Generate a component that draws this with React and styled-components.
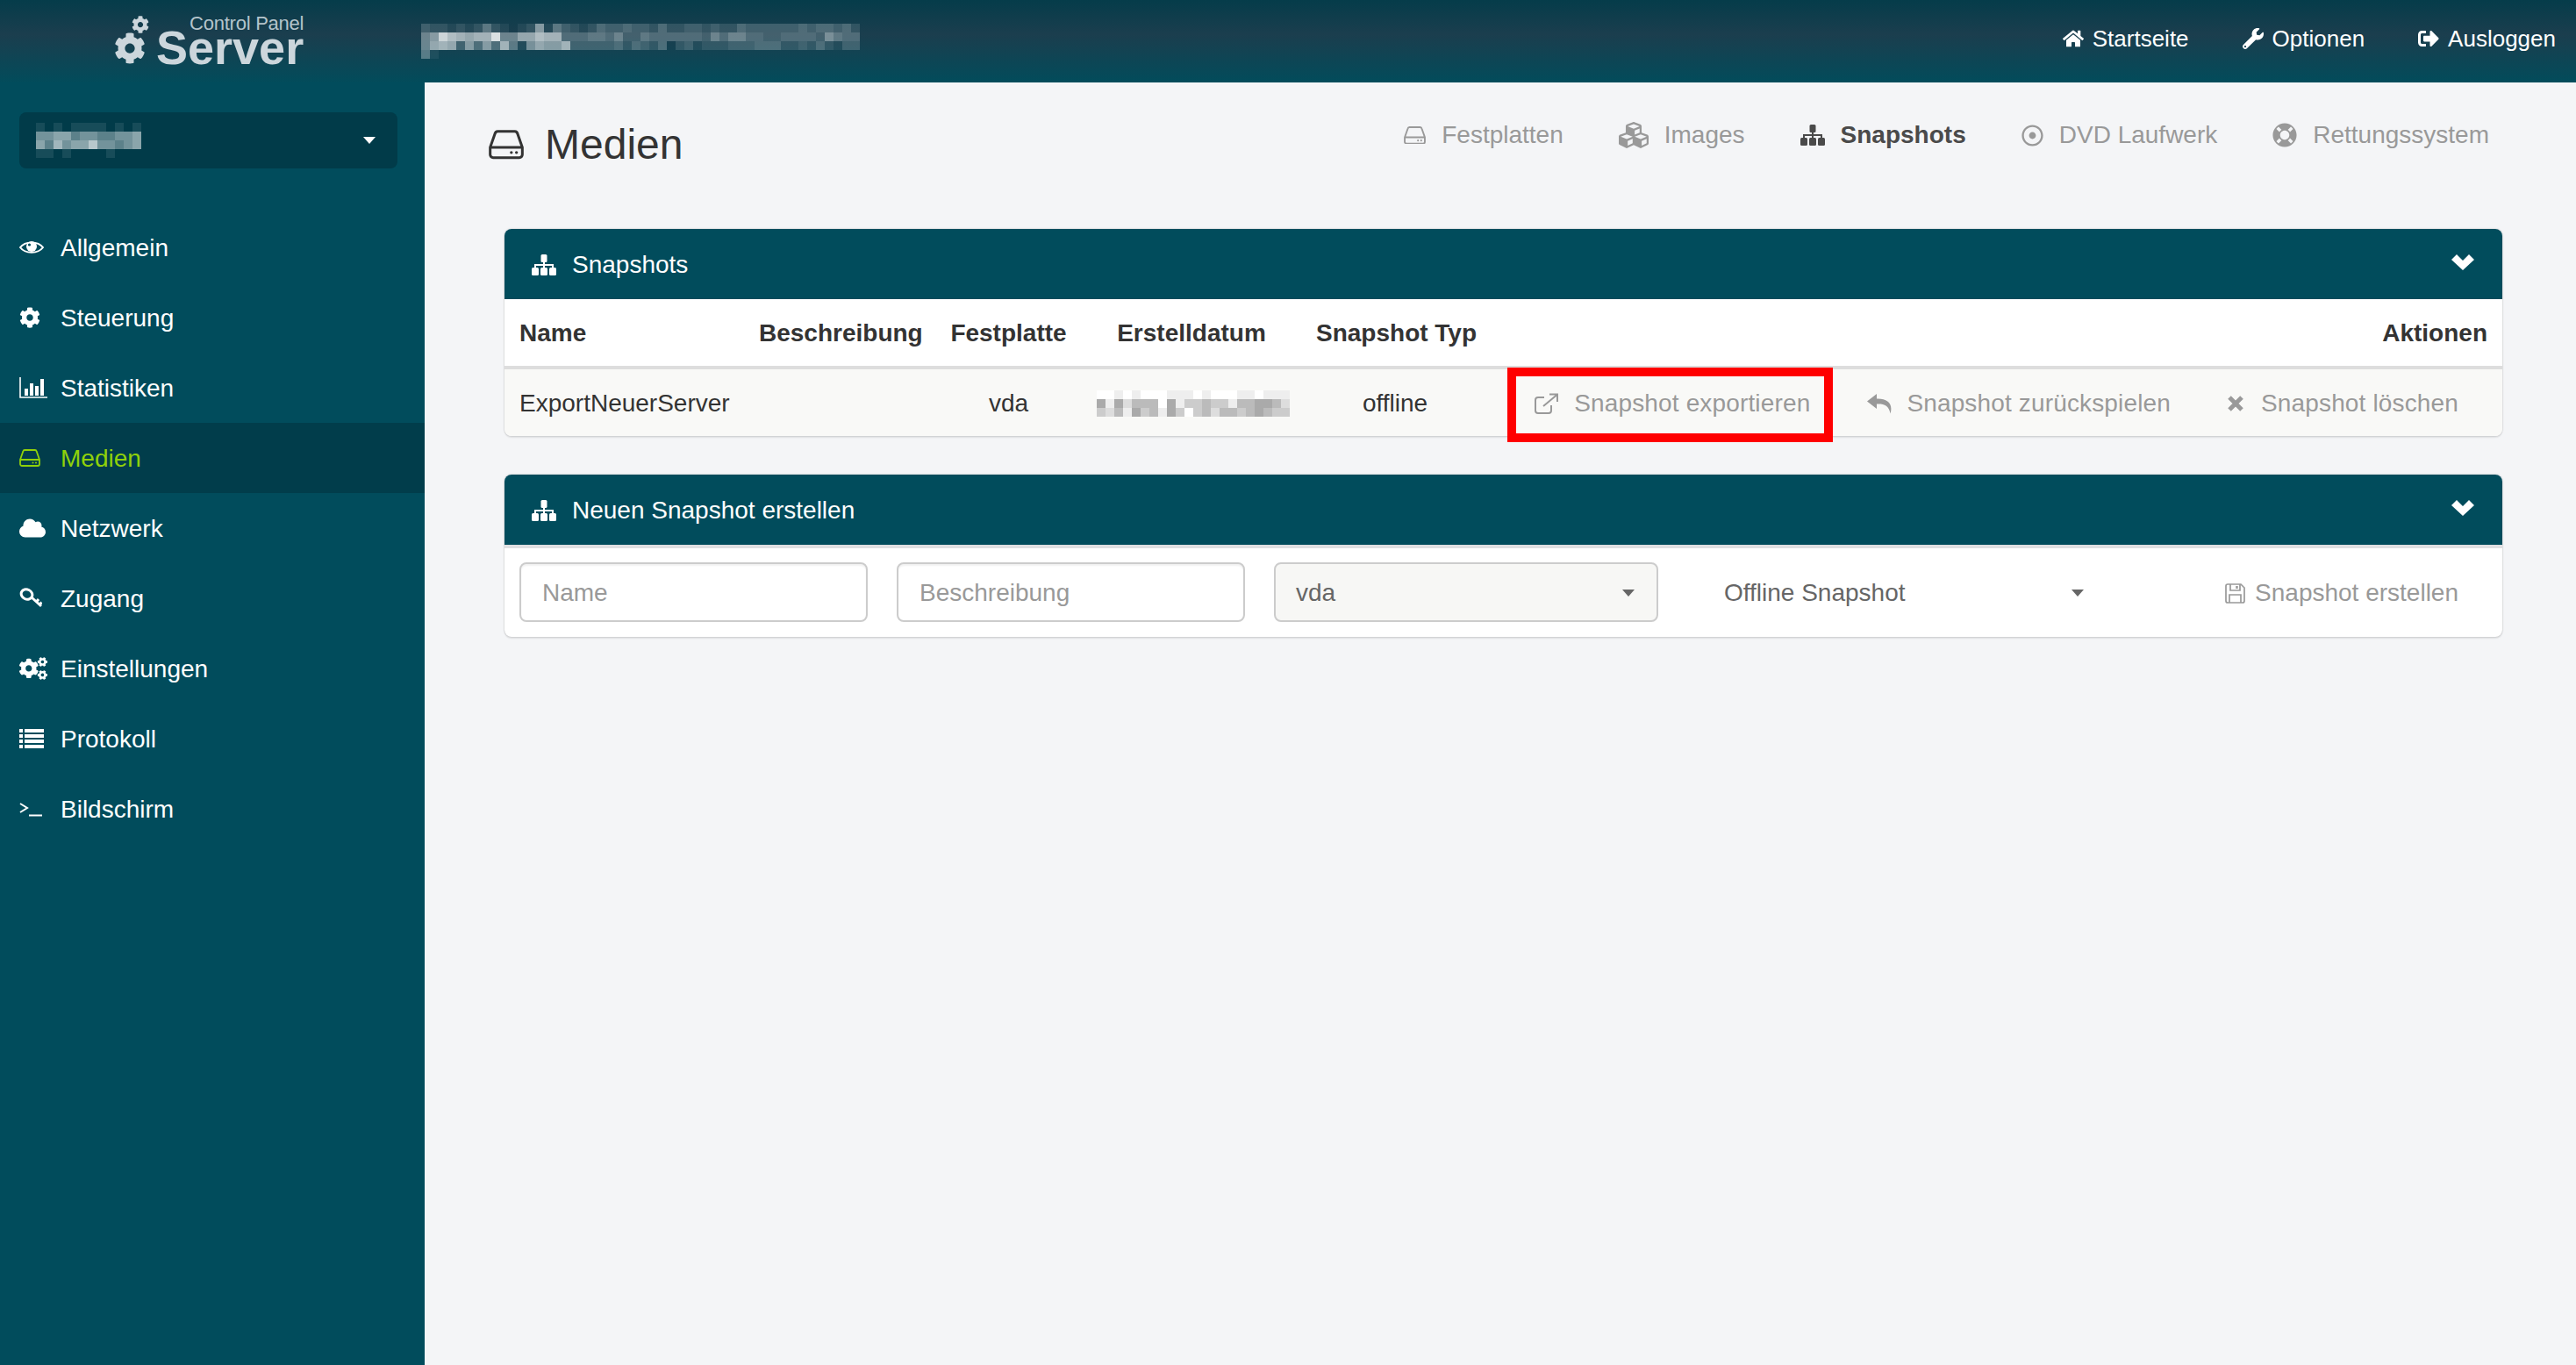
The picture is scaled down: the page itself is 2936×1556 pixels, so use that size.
import React from "react";
import styled, { createGlobalStyle } from "styled-components";
import {
  FaCog, FaCloud, FaCogs, FaHome, FaWrench, FaSignOutAlt, FaCubes, FaRegDotCircle, FaLifeRing,
} from "react-icons/fa";

const Global = createGlobalStyle`
  html, body { margin: 0; padding: 0; background: #f4f5f7; }
  body { font-family: "Liberation Sans", Arial, sans-serif; color: #333; }
  * { box-sizing: border-box; }
`;

const Page = styled.div`
  width: 2936px;
  height: 1556px;
  display: flex;
  flex-direction: column;
  overflow: hidden;
  background: #f4f5f7;
`;

const TopBar = styled.header`
  height: 94px;
  flex: none;
  display: flex;
  align-items: center;
  background: linear-gradient(#053c4a 0%, #1b3e4e 42%, #024c5b 100%);
`;

const Logo = styled.div`
  width: 480px;
  height: 94px;
  padding-left: 130px;
  display: flex;
  flex: none;
`;

const LogoGears = styled.div`
  position: relative;
  width: 48px;
  height: 94px;
  color: #ccd6dc;
  svg { position: absolute; }
  svg:first-child { left: 20px; top: 18px; }
  svg:last-child { left: 0; top: 37px; }
`;

const LogoText = styled.div`
  display: flex;
  flex-direction: column;
  align-items: flex-end;
  color: #ccd6dc;
  padding-top: 19px;
`;

const LogoSmall = styled.span`
  font-size: 22px;
  line-height: 16px;
  color: #b4c4cb;
  font-weight: 400;
  letter-spacing: -0.25px;
`;

const LogoBig = styled.span`
  font-size: 54px;
  line-height: 38px;
  font-weight: 700;
`;

const TopNav = styled.nav`
  margin-left: auto;
  display: flex;
  gap: 61px;
  padding-right: 23px;
  margin-top: -6px;
`;

const TopLink = styled.a`
  display: flex;
  align-items: center;
  gap: 10px;
  font-size: 26px;
  line-height: 32px;
  color: #fff;
`;

const Body = styled.div`
  flex: 1;
  display: flex;
  min-height: 0;
`;

const Sidebar = styled.aside`
  width: 484px;
  flex: none;
  background: #014c5c;
  padding-top: 34px;
`;

const ServerSelect = styled.div`
  margin: 0 31px 0 22px;
  height: 64px;
  border-radius: 8px;
  background: #013b49;
  display: flex;
  align-items: center;
  padding: 0 25px 0 19px;
  justify-content: space-between;
`;

const Caret = styled.i`
  display: block;
  flex: none;
  width: 0;
  height: 0;
  border-left: 7px solid transparent;
  border-right: 7px solid transparent;
  border-top: 8px solid ${(p) => p.$color || "#fff"};
`;

const Menu = styled.ul`
  list-style: none;
  margin: 50px 0 0;
  padding: 0;
`;

const MenuItem = styled.li`
  height: 80px;
  display: flex;
  align-items: center;
  padding-left: 22px;
  font-size: 28px;
  color: ${(p) => (p.$active ? "#8fd10a" : "#fff")};
  background: ${(p) => (p.$active ? "#013d4b" : "transparent")};
`;

const MenuIcon = styled.span`
  width: 47px;
  flex: none;
  display: flex;
  align-items: center;
`;

const MenuLabel = styled.span`
  padding-top: 2px;
`;

const Main = styled.main`
  flex: 1;
  min-width: 0;
  padding-top: 47px;
`;

const PageHead = styled.div`
  height: 120px;
  display: flex;
  align-items: flex-start;
  justify-content: space-between;
  padding: 0 99px 0 73px;
`;

const PageTitle = styled.h1`
  margin: 0;
  display: flex;
  align-items: center;
  gap: 24px;
  font-size: 48px;
  line-height: 48px;
  font-weight: 400;
  color: #333;
`;

const Tabs = styled.nav`
  display: flex;
  gap: 63px;
  margin-top: -4px;
`;

const Tab = styled.a`
  display: flex;
  align-items: center;
  gap: 18px;
  font-size: 28px;
  line-height: 32px;
  color: ${(p) => (p.$active ? "#4a4a4a" : "#999")};
  font-weight: ${(p) => (p.$active ? 700 : 400)};
`;

const Panels = styled.div`
  display: flex;
  flex-direction: column;
  gap: 44px;
  margin: 0 84px 0 91px;
`;

const Panel = styled.section`
  background: #fff;
  border-radius: 8px;
  box-shadow: 0 0 2px rgba(0, 0, 0, 0.25), 0 2px 2px rgba(0, 0, 0, 0.08);
`;

const PanelHeader = styled.div`
  height: 80px;
  background: #014c5c;
  border-radius: 8px 8px 0 0;
  color: #fff;
  font-size: 28px;
  display: flex;
  align-items: center;
  gap: 18px;
  padding: 1px 32px 0 31px;
`;

const PanelChevron = styled.svg`
  margin-left: auto;
  margin-top: -5px;
  flex: none;
`;

const Table = styled.table`
  width: 100%;
  table-layout: fixed;
  border-collapse: collapse;
  font-size: 28px;
`;

const HeadCell = styled.th`
  height: 78px;
  border-bottom: 4px solid #ddd;
  padding: 1px 17px 0;
  font-weight: 700;
  color: #333;
  width: ${(p) => (p.$w ? `${p.$w}px` : "auto")};
  text-align: ${(p) => p.$align || "center"};
  white-space: nowrap;
`;

const Row = styled.tr`
  background: #f9f9f7;
`;

const Cell = styled.td`
  height: 78px;
  padding: 2px 17px 0;
  text-align: ${(p) => p.$align || "center"};
  color: #333;
  white-space: nowrap;
  &:first-child { border-bottom-left-radius: 8px; }
  &:last-child { border-bottom-right-radius: 8px; }
`;

const Actions = styled.div`
  display: flex;
  justify-content: flex-end;
  margin-right: 1px;
`;

const ActionLink = styled.a`
  position: relative;
  display: flex;
  align-items: center;
  gap: ${(p) => p.$gap || 16}px;
  padding: 0 32px;
  color: #999;
  line-height: 32px;
  letter-spacing: 0.15px;
`;

const Highlight = styled.span`
  position: absolute;
  left: 1px;
  top: calc(50% - 41px);
  width: 371px;
  height: 85px;
  border: 10px solid #f00;
  pointer-events: none;
`;

const FormRow = styled.div`
  border-top: 4px solid #dfdfe1;
  display: flex;
  align-items: center;
  gap: 33px;
  padding: 16px 50px 17px 17px;
  font-size: 28px;
`;

const TextInput = styled.input`
  width: 397px;
  height: 68px;
  flex: none;
  border: 2px solid #ccc;
  border-radius: 8px;
  padding: 2px 24px 0;
  background: #fff;
  font: inherit;
  color: #555;
  box-shadow: inset 0 2px 2px rgba(0, 0, 0, 0.06);
  &::placeholder { color: #999; opacity: 1; }
`;

const SelectBox = styled.div`
  width: ${(p) => p.$w}px;
  height: 68px;
  flex: none;
  display: flex;
  align-items: center;
  justify-content: space-between;
  border: 2px solid ${(p) => (p.$plain ? "transparent" : "#ccc")};
  border-radius: 8px;
  background: ${(p) => (p.$plain ? "transparent" : "#f7f7f5")};
  padding: ${(p) => (p.$plain ? "2px 26px 0 40px" : "2px 25px 0 23px")};
  color: #666;
`;

const SaveLink = styled.a`
  margin-left: auto;
  display: flex;
  align-items: center;
  gap: 11px;
  color: #999;
  padding-top: 2px;
`;

const MosaicSvg = styled.svg`
  display: block;
  flex: none;
`;

/* pixelated (redacted) text, drawn from per-row brightness digits */
const Mosaic = ({ rows, color, scale }) => {
  const cols = Math.max(...rows.map((r) => r.length));
  return (
    <MosaicSvg width={cols * 10} height={rows.length * 10} viewBox={`0 0 ${cols * 10} ${rows.length * 10}`} shapeRendering="crispEdges">
      {rows.map((row, y) =>
        row.split("").map((c, x) => {
          if (c === " ") return null;
          const v = parseInt(c, 16);
          return <rect key={`${x}-${y}`} x={x * 10} y={y * 10} width="10" height="10" fill={color} opacity={v * scale} />;
        })
      )}
    </MosaicSvg>
  );
};

const GrayMosaic = ({ rows }) => (
  <MosaicSvg width={220} height={30} viewBox="0 0 220 30" shapeRendering="crispEdges">
    {rows.map((row, y) =>
      row.split("").map((c, x) => (
        <rect key={`${x}-${y}`} x={x * 10} y={y * 10} width="10" height="10" fill={`#${c}${c}${c}`} />
      ))
    )}
  </MosaicSvg>
);

const HddIcon = ({ w = 24 }) => (
  <svg width={w} height={(w * 20) / 24} viewBox="0 0 24 20" fill="none" stroke="currentColor" strokeWidth="1.8">
    <path d="M1 12 L4.3 2.6 A2 2 0 0 1 6.2 1 H17.8 A2 2 0 0 1 19.7 2.6 L23 12 V17 A2 2 0 0 1 21 19 H3 A2 2 0 0 1 1 17 Z M1 12 H23" />
    <circle cx="15.5" cy="15.5" r="1" fill="currentColor" stroke="none" />
    <circle cx="19" cy="15.5" r="1" fill="currentColor" stroke="none" />
  </svg>
);

const SitemapIcon = () => (
  <svg width="28" height="24" viewBox="0 0 28 24" fill="currentColor">
    <rect x="10.5" y="0" width="7" height="9" rx="1.5" />
    <rect x="0" y="15" width="8" height="9" rx="1.5" />
    <rect x="10" y="15" width="8" height="9" rx="1.5" />
    <rect x="20" y="15" width="8" height="9" rx="1.5" />
    <path d="M14 8 V16 M4 16 V12 H24 V16" fill="none" stroke="currentColor" strokeWidth="2" />
  </svg>
);

const EyeIcon = () => (
  <svg width="28" height="18" viewBox="0 0 28 18">
    <path d="M1 9 C6.5 1.5 21.5 1.5 27 9 C21.5 16.5 6.5 16.5 1 9 Z" fill="none" stroke="currentColor" strokeWidth="2" />
    <circle cx="14" cy="8" r="6" fill="currentColor" />
    <circle cx="11.5" cy="6" r="1.6" fill="#014c5c" />
  </svg>
);

const StatsIcon = () => (
  <svg width="32" height="24" viewBox="0 0 32 24" fill="currentColor">
    <path d="M1 0 V23 H32" fill="none" stroke="currentColor" strokeWidth="1.6" />
    <rect x="6" y="13" width="4" height="8" />
    <rect x="12" y="7" width="4" height="14" />
    <rect x="18" y="10" width="4" height="11" />
    <rect x="24" y="2" width="4" height="19" />
  </svg>
);

const KeyIcon = () => (
  <svg width="26" height="25" viewBox="0 0 26 25" fill="none" stroke="currentColor" strokeWidth="3">
    <ellipse cx="8.5" cy="7.5" rx="6.5" ry="5.5" transform="rotate(25 8.5 7.5)" />
    <path d="M14 11 L25 21 M19.5 16 L22 13 M23 19.5 L25.5 16.5" />
  </svg>
);

const ListIcon = () => (
  <svg width="28" height="22" viewBox="0 0 28 22" fill="currentColor">
    {[0, 6, 12, 18].map((y) => (
      <React.Fragment key={y}>
        <rect x="0" y={y} width="4" height="4" />
        <rect x="6" y={y} width="22" height="4" />
      </React.Fragment>
    ))}
  </svg>
);

const TerminalIcon = () => (
  <svg width="26" height="18" viewBox="0 0 26 18" fill="none" stroke="currentColor" strokeWidth="2">
    <path d="M1 3 L9 8 L1 13 M11 16.5 H26" />
  </svg>
);

const ExportIcon = () => (
  <svg width="28" height="24" viewBox="0 0 28 24" fill="none" stroke="currentColor" strokeWidth="2">
    <path d="M11 5 H4 Q1 5 1 8 V20 Q1 23 4 23 H16 Q19 23 19 20 V14" />
    <path d="M10 15 L25 2.5 M17 1.5 H26 V10" />
  </svg>
);

const ReplyIcon = () => (
  <svg width="30" height="24" viewBox="0 0 30 24" fill="currentColor">
    <path d="M12 1 L1 9.5 L12 18 V12.5 C20 12 26 14 27.5 23.5 C31 12 24 6 12 6.5 Z" />
  </svg>
);

const CrossIcon = () => (
  <svg width="20" height="18" viewBox="0 0 20 18" fill="none" stroke="currentColor" strokeWidth="5">
    <path d="M3 2 L17 16 M17 2 L3 16" />
  </svg>
);

const SaveIcon = () => (
  <svg width="23" height="23" viewBox="0 0 23 23" fill="none" stroke="currentColor" strokeWidth="1.7">
    <path d="M1 3 Q1 1 3 1 H18 L22 5 V20 Q22 22 20 22 H3 Q1 22 1 20 Z" />
    <path d="M6 1 V8 H17 V1 M5 22 V13 H18 V22" />
    <path d="M13.5 3 V6" strokeWidth="2.4" />
  </svg>
);

const ChevronIcon = () => (
  <PanelChevron width="26" height="18" viewBox="0 0 26 18" fill="#fff">
    <path d="M0 6 L6 0 L13 7 L20 0 L26 6 L13 18 Z" />
  </PanelChevron>
);

const menu = [
  ["Allgemein", <EyeIcon />],
  ["Steuerung", <FaCog size={24} />],
  ["Statistiken", <StatsIcon />],
  ["Medien", <HddIcon />, true],
  ["Netzwerk", <FaCloud size={30} />],
  ["Zugang", <KeyIcon />],
  ["Einstellungen", <FaCogs size={32} />],
  ["Protokoll", <ListIcon />],
  ["Bildschirm", <TerminalIcon />],
];

const tabs = [
  ["Festplatten", <HddIcon w={25} />],
  ["Images", <FaCubes size={34} />],
  ["Snapshots", <SitemapIcon />, true],
  ["DVD Laufwerk", <FaRegDotCircle size={25} />],
  ["Rettungssystem", <FaLifeRing size={28} />],
];

const headerBlur = [
  "32212125210128153212433433242233232243333334344342",
  "68dba9aae6699baa444554633544444436466443344443754".padEnd(50, "4"),
  "69a938484a51798 8a33333424324 02312223334442232 4213333".replace(/ /g, "").slice(0, 50),
  "51",
];

const selectBlur = ["1 1 1111 1 1", "556645544556", "647566855456", "11 1    1"];

const dateBlur = ["ffefefffeeefefffeefeee", "aeadbbbfaeccbccebbaabd", "cdbeacbeacfcbdbbcbabcc"];

export default function App() {
  return (
    <Page>
      <Global />
      <TopBar>
        <Logo>
          <LogoGears>
            <FaCog size={20} />
            <FaCog size={36} />
          </LogoGears>
          <LogoText>
            <LogoSmall>Control Panel</LogoSmall>
            <LogoBig>Server</LogoBig>
          </LogoText>
        </Logo>
        <Mosaic rows={headerBlur} color="#fff" scale={0.06} />
        <TopNav>
          <TopLink><FaHome size={24} />Startseite</TopLink>
          <TopLink><FaWrench size={24} />Optionen</TopLink>
          <TopLink><FaSignOutAlt size={24} />Ausloggen</TopLink>
        </TopNav>
      </TopBar>
      <Body>
        <Sidebar>
          <ServerSelect>
            <Mosaic rows={selectBlur} color="#fff" scale={0.09} />
            <Caret />
          </ServerSelect>
          <Menu>
            {menu.map(([label, icon, active]) => (
              <MenuItem key={label} $active={active}>
                <MenuIcon>{icon}</MenuIcon>
                <MenuLabel>{label}</MenuLabel>
              </MenuItem>
            ))}
          </Menu>
        </Sidebar>
        <Main>
          <PageHead>
            <PageTitle><HddIcon w={40} />Medien</PageTitle>
            <Tabs>
              {tabs.map(([label, icon, active]) => (
                <Tab key={label} $active={active}>{icon}{label}</Tab>
              ))}
            </Tabs>
          </PageHead>
          <Panels>
            <Panel>
              <PanelHeader>
                <SitemapIcon />Snapshots
                <ChevronIcon />
              </PanelHeader>
              <Table>
                <thead>
                  <tr>
                    <HeadCell $w={273} $align="left">Name</HeadCell>
                    <HeadCell $w={218}>Beschreibung</HeadCell>
                    <HeadCell $w={167}>Festplatte</HeadCell>
                    <HeadCell $w={250}>Erstelldatum</HeadCell>
                    <HeadCell $w={214}>Snapshot Typ</HeadCell>
                    <HeadCell $align="right">Aktionen</HeadCell>
                  </tr>
                </thead>
                <tbody>
                  <Row>
                    <Cell $align="left">ExportNeuerServer</Cell>
                    <Cell />
                    <Cell>vda</Cell>
                    <Cell>
                      <GrayMosaic rows={dateBlur} />
                    </Cell>
                    <Cell>offline</Cell>
                    <Cell>
                      <Actions>
                        <ActionLink $gap={17}>
                          <ExportIcon />Snapshot exportieren
                          <Highlight />
                        </ActionLink>
                        <ActionLink><ReplyIcon />Snapshot zurückspielen</ActionLink>
                        <ActionLink $gap={19}><CrossIcon />Snapshot löschen</ActionLink>
                      </Actions>
                    </Cell>
                  </Row>
                </tbody>
              </Table>
            </Panel>
            <Panel>
              <PanelHeader>
                <SitemapIcon />Neuen Snapshot erstellen
                <ChevronIcon />
              </PanelHeader>
              <FormRow>
                <TextInput placeholder="Name" />
                <TextInput placeholder="Beschreibung" />
                <SelectBox $w={438}>vda<Caret $color="#666" /></SelectBox>
                <SelectBox $w={480} $plain>Offline Snapshot<Caret $color="#666" /></SelectBox>
                <SaveLink><SaveIcon />Snapshot erstellen</SaveLink>
              </FormRow>
            </Panel>
          </Panels>
        </Main>
      </Body>
    </Page>
  );
}
